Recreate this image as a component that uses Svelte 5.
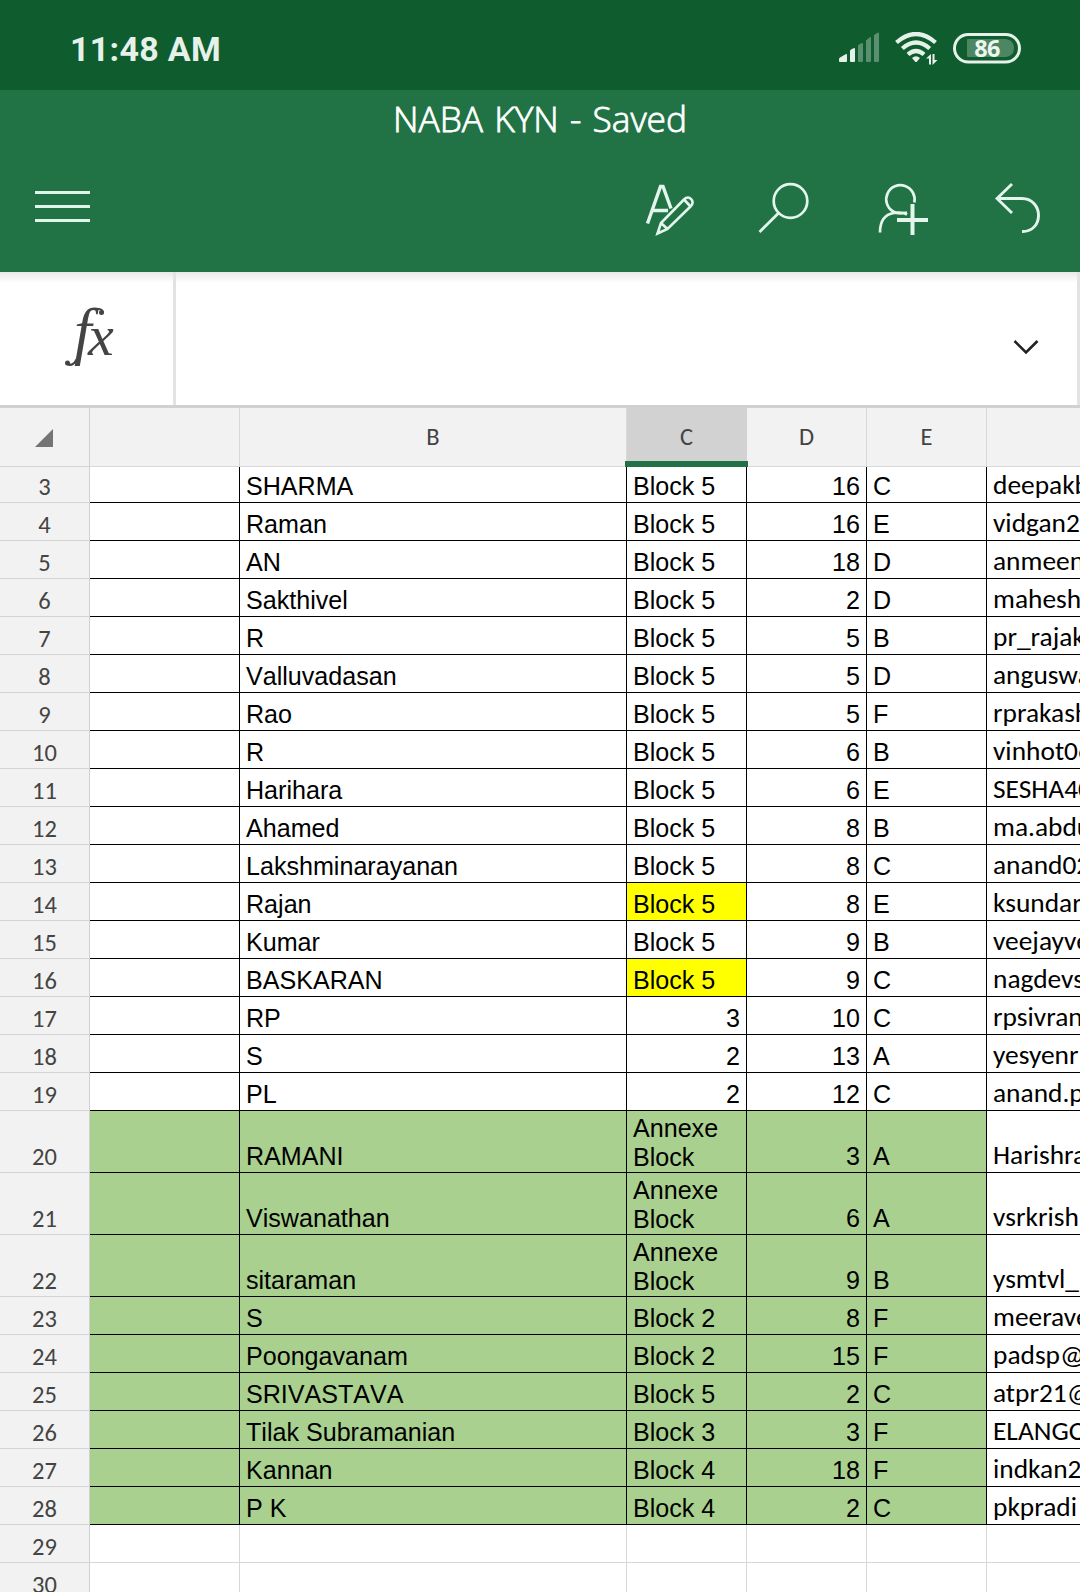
<script>
  const columns = ['', 'B', 'C', 'D', 'E', ''];

  const plain = [
    ['SHARMA', 'Block 5', 16, 'C', 'deepakb'],
    ['Raman', 'Block 5', 16, 'E', 'vidgan2'],
    ['AN', 'Block 5', 18, 'D', 'anmeen'],
    ['Sakthivel', 'Block 5', 2, 'D', 'mahesh'],
    ['R', 'Block 5', 5, 'B', 'pr_rajak'],
    ['Valluvadasan', 'Block 5', 5, 'D', 'anguswa'],
    ['Rao', 'Block 5', 5, 'F', 'rprakash'],
    ['R', 'Block 5', 6, 'B', 'vinhot06'],
    ['Harihara', 'Block 5', 6, 'E', 'SESHA40'],
    ['Ahamed', 'Block 5', 8, 'B', 'ma.abdu'],
    ['Lakshminarayanan', 'Block 5', 8, 'C', 'anand02'],
    ['Rajan', 'Block 5', 8, 'E', 'ksundar'],
    ['Kumar', 'Block 5', 9, 'B', 'veejayve'],
    ['BASKARAN', 'Block 5', 9, 'C', 'nagdevs'],
    ['RP', 3, 10, 'C', 'rpsivran'],
    ['S', 2, 13, 'A', 'yesyenr'],
    ['PL', 2, 12, 'C', 'anand.p'],
    ['RAMANI', 'Annexe Block', 3, 'A', 'Harishra'],
    ['Viswanathan', 'Annexe Block', 6, 'A', 'vsrkrish'],
    ['sitaraman', 'Annexe Block', 9, 'B', 'ysmtvl_'],
    ['S', 'Block 2', 8, 'F', 'meerave'],
    ['Poongavanam', 'Block 2', 15, 'F', 'padsp@'],
    ['SRIVASTAVA', 'Block 5', 2, 'C', 'atpr21@'],
    ['Tilak Subramanian', 'Block 3', 3, 'F', 'ELANGO'],
    ['Kannan', 'Block 4', 18, 'F', 'indkan2'],
    ['P K', 'Block 4', 2, 'C', 'pkpradi']
  ];

  const rows = plain.map(([name, block, flat, wing, mail], i) => ({
    n: i + 3,
    name, block, flat, wing, mail,
    tall: block === 'Annexe Block',
    green: i + 3 >= 20,
    yellow: i + 3 === 14 || i + 3 === 16
  }));
</script>

<div class="screen">
  <div class="status">
    <span class="time">11:48 AM</span>
    <div class="indicators">
      <svg class="signal" width="42" height="32" viewBox="0 0 42 32">
        <path d="M0 29V27Q0 26 1 25.5L7 22Q8 21.500 8 23V29Q8 30 7 30H1Q0 30 0 29Z M11 29V19Q11 18 12 17.500L15 16Q16 16 16 17V29Q16 30 15 30H12Q11 30 11 29Z" fill="#e6f1ea" />
        <path d="M19 29V14Q19 13 20 12.500L23 11Q24 11 24 12V29Q24 30 23 30H20Q19 30 19 29Z M27 29V8.500L31 5Q32 5 32 6V29Q32 30 31 30H28Q27 30 27 29Z M35 29V3L39 .5Q40 .5 40 1.500V29Q40 30 39 30H36Q35 30 35 29Z" fill="#5a9070" />
      </svg>
      <svg class="wifi" width="44" height="34" viewBox="0 0 44 34">
        <g fill="none" stroke="#e6f1ea" stroke-width="4.300">
          <path d="M1.500 10.500Q21 -6.500 40.500 10.500" />
          <path d="M7.300 16.500Q21 4.500 34.700 16.500" />
          <path d="M13 22.500Q21 15.500 29 22.500" />
        </g>
        <path d="M17 26Q21 22.500 25 26L22 29.500Q21 30.500 20 29.500Z" fill="#e6f1ea" />
        <path d="M31 26.500L36 22V32.500H34V26.500Z M37.500 22H39.500V28H42.500L37.500 33Z" fill="#e6f1ea" />
      </svg>
      <svg class="battery" width="68" height="31" viewBox="0 0 68 31">
        <rect x="1.500" y="1.500" width="65" height="27.500" rx="13.750" fill="none" stroke="#e6f1ea" stroke-width="3" />
        <path d="M15 6H53Q61 7.500 61 15Q61 23 53 24H15Q14 24 14 23V7Q14 6 15 6Z" fill="#4c8662" />
        <text x="34" y="23.500" text-anchor="middle" font-family="Open Sans, sans-serif" font-weight="700" font-size="23.500" letter-spacing="-0.600" fill="#eef6f1">86</text>
      </svg>
    </div>
  </div>

  <header class="appbar">
    <div class="title">NABA KYN - Saved</div>
    <div class="tools">
      <svg class="menu" width="55" height="32" viewBox="0 0 55 32" stroke="#e0f5ea" stroke-width="3">
        <path d="M0 1.500H55M0 15.500H55M0 29.500H55" />
      </svg>
      <svg class="draw" width="50" height="54" viewBox="0 0 50 54" fill="none" stroke="#e4f6ec" stroke-width="3">
        <path d="M2.500 41.500L15.500 4.500H18L26 26.500M7.500 28.500H23" stroke-width="3.400" />
        <path d="M12.500 51.500L16 41L39 17.500Q43 13.500 46.500 17.500Q49 21 45.500 24.500L22.500 47Z M16 41L22.500 47M39 17.500L45.500 24.500" stroke-width="2.600" />
      </svg>
      <svg class="search" width="52" height="54" viewBox="0 0 52 54" fill="none" stroke="#e4f6ec" stroke-width="2.700">
        <circle cx="32.500" cy="19" r="16.800" /><path d="M20.600 31L1.500 50" />
      </svg>
      <svg class="share" width="50" height="54" viewBox="0 0 50 54" fill="none" stroke="#e4f6ec" stroke-width="2.700">
        <path d="M36.300 20.500A14.200 14.200 0 1 0 15 29.500Q20 32.500 29 30.500" />
        <path d="M2 50.500Q2 33 16 31Q24 29.500 29 32.500" />
        <path d="M34.500 22V53M19 38H50" stroke-width="4" />
      </svg>
      <svg class="undo" width="46" height="54" viewBox="0 0 46 54" fill="none" stroke="#e4f6ec" stroke-width="2.900">
        <path d="M17 2L2 16.500L17 31M2 16.500H27C49 17 49 50 27 49.500" />
      </svg>
    </div>
  </header>

  <div class="formula">
    <div class="fx">
      <svg width="60" height="70" viewBox="0 0 60 70" fill="#444" font-family="Liberation Serif, serif" font-style="italic">
        <text x="16" y="50" font-size="63">f<tspan x="30" y="53" font-size="58">x</tspan></text>
        <!-- curled terminals of the function sign -->
        <path d="M19 57Q15 65 9 62" fill="none" stroke="#444" stroke-width="2.400" />
        <circle cx="9.500" cy="61" r="2.500" />
        <circle cx="43.500" cy="10.500" r="2.500" />
        <path d="M38 7.500Q44 6 45 10" fill="none" stroke="#444" stroke-width="2" />
      </svg>
    </div>
    <div class="input">
      <svg width="26" height="17" viewBox="0 0 26 17" fill="none" stroke="#222" stroke-width="2.600"><path d="M1.500 2L13 13.500L24.500 2" /></svg>
    </div>
  </div>

  <div class="sheet">
    <div class="row head">
      <div class="num corner"><svg width="18" height="18" viewBox="0 0 18 18"><path d="M18 0V18H0Z" fill="#757575" /></svg></div>
      {#each columns as c}
        <div class="cell" class:selected={c === 'C'}>{c}</div>
      {/each}
    </div>
    {#each rows as r}
      <div class="row data" class:first={r.n === 3} class:tall={r.tall} class:green={r.green}>
        <div class="num">{r.n}</div>
        <div class="cell"></div>
        <div class="cell">{r.name}</div>
        <div class="cell block" class:yellow={r.yellow} class:right={typeof r.block === 'number'}>{r.block}</div>
        <div class="cell right">{r.flat}</div>
        <div class="cell">{r.wing}</div>
        <div class="cell mail">{r.mail}</div>
      </div>
    {/each}
    {#each [29, 30] as n}
      <div class="row blank">
        <div class="num">{n}</div>
        {#each columns as _}<div class="cell"></div>{/each}
      </div>
    {/each}
  </div>
</div>

<style>
  :global(body) { margin: 0; background: #fff; }
  .screen {
    width: 1080px; height: 1592px; overflow: hidden; background: #fff;
    display: flex; flex-direction: column;
    font-family: 'Liberation Sans', Arial, sans-serif;
  }
  .screen * { box-sizing: border-box; }
  .status {
    flex: none; height: 90px; background: #0f5c2f; padding: 0 59px 0 70px;
    display: flex; justify-content: space-between; align-items: flex-start;
  }
  .time { font: 700 34px/40px Roboto, sans-serif; color: #e6f1ea; margin-top: 29px; letter-spacing: 0.3px; }
  .indicators { display: flex; align-items: flex-start; padding-top: 32px; }
  .wifi { margin-left: 14px; }
  .battery { margin-left: 14px; margin-top: 1px; }
  .appbar { flex: none; height: 182px; background: #217346; display: flex; flex-direction: column; }
  .title {
    font: 300 35.3px/44px 'Open Sans', 'Noto Sans', sans-serif; color: #fff; text-align: center;
    -webkit-text-stroke: 0.8px #fff;
    margin-top: 6px; height: 46px; word-spacing: 2px; white-space: nowrap;
  }
  .tools { display: flex; padding: 42px 39px 0 35px; height: 100px; align-items: flex-start; }
  .tools svg { flex: none; margin-top: -2px; }
  .tools .menu { margin: 7px auto 0 0; }
  .tools .search { margin-left: 63px; }
  .tools .share { margin-left: 68px; }
  .tools .undo { margin-left: 67px; }
  .formula {
    flex: none; height: 136px; display: flex; border-bottom: 3px solid #d1d1d1;
    background: linear-gradient(#e9e9e9, #fff 11px);
  }
  .fx { width: 176px; border-right: 3px solid #e3e3e3; padding: 30px 0 0 58px; }
  .fx svg { display: block; overflow: visible; }
  .input { flex: 1; border-right: 3px solid #e3e3e3; display: flex; justify-content: flex-end; padding: 67px 38px 0 0; }
  .sheet { flex: none; }
  .row { display: grid; grid-template-columns: 90px 150px 387px 120px 120px 120px 93px; height: 38px; }
  .num {
    background: #f2f2f2; border-right: 1px solid #d0d0d0; border-bottom: 1px solid #d4d4d4;
    font: 24.5px/30px Carlito, Lato, sans-serif; color: #444;
    display: flex; justify-content: center; align-items: flex-end;
  }
  .cell {
    border-right: 1px solid #d8d8d8; border-bottom: 1px solid #d8d8d8;
    overflow: hidden; display: flex; align-items: flex-end;
    font-size: 25.1px; line-height: 29px; padding: 0 6px 1px 6px; font-kerning: none;
  }
  .head { height: 59px; }
  .head .cell {
    background: #f2f2f2; justify-content: center; align-items: center; color: #444;
    font: 24.5px/30px Carlito, Lato, sans-serif; padding: 0 6px;
  }
  .head .cell.selected {
    background: #d2d2d2; border-right-color: #d2d2d2; position: relative; overflow: visible;
  }
  .selected::after {
    content: ''; position: absolute; left: -2px; right: -2px; bottom: -1px; height: 6px; background: #217346;
  }
  .corner { align-items: center; padding: 2px 2px 0 0; }
  .data .cell { border-color: #000; color: #000; }
  .data.first { height: 36px; }
  .data.tall { height: 62px; }
  .tall .block { padding-bottom: 0; }
  .green .cell:not(.mail) { background: #a9d08e; }
  .data .cell.yellow { background: #ff0; }
  .cell.right { justify-content: flex-end; }
  .data .mail { font: 27.4px/30px Carlito, Lato, sans-serif; white-space: nowrap; padding-bottom: 2px; }
  .data .mail, .blank .cell:last-child, .head .cell:last-child { border-right: 0; }
</style>
